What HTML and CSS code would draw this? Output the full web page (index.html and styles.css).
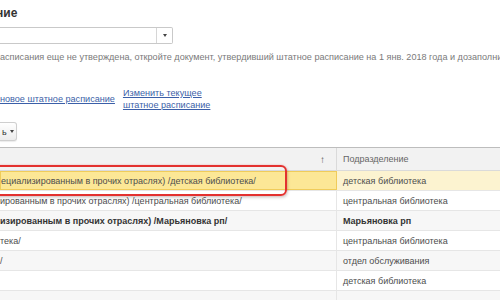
FILE: index.html
```html
<!DOCTYPE html>
<html lang="ru">
<head>
<meta charset="utf-8">
<link rel="stylesheet" href="styles.css">
</head>
<body>
<div class="page">
  <div class="title">ние</div>
  <div class="field">
    <div class="field-input"></div>
    <div class="field-drop"><span class="tri"></span></div>
  </div>
  <div class="note">асписания еще не утверждена, откройте документ, утвердивший штатное расписание на 1 янв. 2018 года и дозаполните его</div>
  <div class="actions">
    <a class="link" href="#">новое штатное расписание</a>
    <a class="link link-wrap" href="#">Изменить текущее штатное расписание</a>
  </div>
  <div class="toolbar">
    <div class="btn">ь <span class="tri"></span></div>
  </div>
  <div class="grid">
    <div class="row head">
      <div class="cell c1">↑</div>
      <div class="cell c2">Подразделение</div>
    </div>
    <div class="row sel">
      <div class="cell c1">ециализированным в прочих отраслях) /детская библиотека/</div>
      <div class="cell c2">детская библиотека</div>
    </div>
    <div class="row">
      <div class="cell c1">ированным в прочих отраслях) /центральная библиотека/</div>
      <div class="cell c2">центральная библиотека</div>
    </div>
    <div class="row alt bold">
      <div class="cell c1">изированным в прочих отраслях) /Марьяновка рп/</div>
      <div class="cell c2">Марьяновка рп</div>
    </div>
    <div class="row">
      <div class="cell c1">тека/</div>
      <div class="cell c2">центральная библиотека</div>
    </div>
    <div class="row alt">
      <div class="cell c1">/</div>
      <div class="cell c2">отдел обслуживания</div>
    </div>
    <div class="row">
      <div class="cell c1"></div>
      <div class="cell c2">детская библиотека</div>
    </div>
    <div class="row alt">
      <div class="cell c1"></div>
      <div class="cell c2"></div>
    </div>
    <div class="mark"></div>
  </div>
</div>
</body>
</html>
```
FILE: styles.css
```css
html, body {
  margin: 0;
  padding: 0;
  background: #fff;
}
.page {
  width: 500px;
  height: 300px;
  overflow: hidden;
  font-family: "Liberation Sans", Arial, sans-serif;
  font-size: 9px;
  color: #4d4d4d;
}
.title {
  margin-top: 4px;
  margin-left: -4px;
  height: 18px;
  line-height: 18px;
  font-size: 12px;
  font-weight: bold;
  color: #333;
}
.field {
  margin-top: 5px;
  width: 173px;
  height: 17px;
  display: flex;
  border: 1px solid #c9c9c9;
  border-left: none;
  box-sizing: border-box;
  border-radius: 0 2px 2px 0;
}
.field-input {
  flex: 1;
}
.field-drop {
  width: 15px;
  border-left: 1px solid #d6d6d6;
  display: flex;
  align-items: center;
  justify-content: center;
}
.tri {
  display: inline-block;
  width: 0;
  height: 0;
  border-left: 2.5px solid transparent;
  border-right: 2.5px solid transparent;
  border-top: 3px solid #444;
  vertical-align: middle;
}
.note {
  margin-top: 6px;
  line-height: 14px;
  font-size: 9.1px;
  white-space: nowrap;
  color: #7a7a7a;
}
.actions {
  margin-top: 23px;
  display: flex;
  align-items: center;
  gap: 8px;
  line-height: 12px;
  font-size: 9.1px;
}
.link {
  color: #3b5fa8;
  text-decoration: underline;
  white-space: nowrap;
}
.link-wrap {
  white-space: normal;
  width: 92px;
}
.toolbar {
  margin-top: 11px;
  display: flex;
}
.btn {
  width: 17px;
  height: 19px;
  box-sizing: border-box;
  border: 1px solid #cfcfcf;
  border-left: none;
  border-radius: 0 3px 3px 0;
  background: linear-gradient(#ffffff, #ececec);
  display: flex;
  align-items: center;
  gap: 3px;
  padding-left: 2px;
  color: #333;
  box-shadow: 0 1px 1px rgba(0,0,0,0.08);
}
.grid {
  position: relative;
  margin-top: 6px;
  border-top: 1px solid #bdbdbd;
}
.row {
  display: flex;
  height: 20px;
  box-sizing: border-box;
  border-bottom: 1px solid #e6e6e6;
  background: #fff;
}
.row.alt {
  background: #f7f7f7;
}
.row.bold {
  font-weight: bold;
  color: #333;
}
.cell {
  display: flex;
  align-items: center;
  white-space: nowrap;
  overflow: hidden;
  box-sizing: border-box;
}
.c1 {
  width: 337px;
  border-right: 1px solid #e6e6e6;
}
.c2 {
  flex: 1;
  padding-left: 6px;
}
.head {
  height: 23px;
  background: #f2f2f2;
  border-bottom: 1px solid #dadada;
  color: #666;
}
.head .c1 {
  justify-content: flex-end;
  padding-right: 11px;
  border-right: 1px solid #dadada;
  color: #555;
  font-size: 10px;
}
.sel {
  background: #fcf3d0;
}
.sel .c1 {
  background: #fce796;
  border: 1px solid #f0cc5a;
}
.mark {
  position: absolute;
  left: -10px;
  top: 17px;
  width: 297px;
  height: 31px;
  box-sizing: border-box;
  border: 2px solid #e3312f;
  border-radius: 6px;
  box-shadow: 0 0 2px rgba(227,49,47,0.35), 1px 2px 3px rgba(0,0,0,0.15);
}
```
